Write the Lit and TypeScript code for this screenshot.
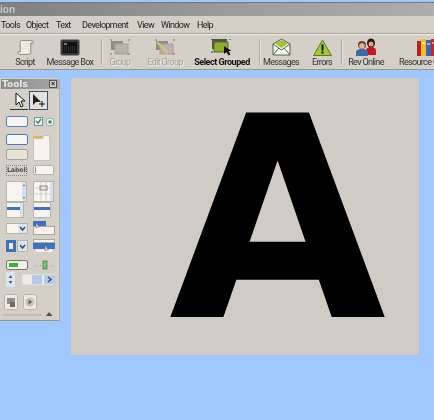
import { LitElement, html, css, svg } from "lit";
import { customElement } from "lit/decorators.js";

const menus = [["Tools",25],["Object",30],["Text",26],["Development",55],["View",24],["Window",36],["Help",20]] as const;

const ic = (w:number,h:number,body:any,vw=w,vh=h) => html`<svg width=${w} height=${h} viewBox="0 0 ${vw} ${vh}">${body}</svg>`;

const scriptIc = ic(17,17,svg`<path d="M5 1h13c1.500 0 2 1 2 2v1h-3v11c0 2-1 3-3 3H3c-1.500 0-2-1-2-2v-1h3V3c0-1 .5-2 1-2z" fill="#f2efe6" stroke="#77756c"/><path d="M7 5h8M7 8h8M7 11h8" stroke="#dcd9cf"/>`,21,19);
const msgIc = ic(20,17,svg`<rect x=".5" y=".5" width="19" height="16" rx="2" fill="#3a3a3a" stroke="#8b8b8b"/><rect x="3" y="3" width="14" height="11" fill="#111"/><path d="M4 5h3" stroke="#ddd"/><path d="M4 8h11M4 10h11M4 12h11" stroke="#444" stroke-dasharray="1 1"/>`);
const groupIc = ic(20,17,svg`<rect x="1" y="2" width="12" height="9" fill="#8f8d86"/><rect x="5" y="5" width="13" height="10" fill="#b5b3ab" stroke="#a3a19a"/><path d="M0 1h2M18 1h2M18 15h2M0 15h2" stroke="#777"/>`);
const editIc = ic(20,17,svg`<rect x="1" y="2" width="12" height="9" fill="#8f8d86"/><rect x="5" y="5" width="13" height="10" fill="#b5b3ab" stroke="#a3a19a"/><path d="M2 3l11 11" stroke="#d8c27a" stroke-width="2"/><path d="M0 1h2M18 1h2M18 15h2" stroke="#777"/>`);
const selIc = ic(22,17,svg`<rect x="1" y="0" width="15" height="10" fill="#55534d"/><rect x="3" y="3" width="14" height="10" fill="#8fae2a" stroke="#55652a"/><path d="M13 7l0 8 2.500-2 2 3.500 2-1-2-3.500 3 0z" fill="#111"/><path d="M0 0h2M18 0h2M0 13h2" stroke="#333"/>`);
const mailIc = ic(19,18,svg`<path d="M1 6L9.500 1 18 6v11H1z" fill="#f4f6ee" stroke="#55604a"/><path d="M3 5.500L9.500 2 16 5.500 9.500 10z" fill="#9cc23a"/><path d="M1 6l8.500 6L18 6M1 17l6-7M18 17l-6-7" fill="none" stroke="#55604a"/>`);
const warnIc = ic(19,17,svg`<path d="M9.500 1L18.500 16.500H.5z" fill="#a2c83a" stroke="#5f7a24"/><path d="M9.500 5.500v6" stroke="#111" stroke-width="2"/><path d="M9.500 12.500v2" stroke="#111" stroke-width="2"/>`);
const revIc = ic(21,18,svg`<ellipse cx="15" cy="5" rx="4" ry="4.500" fill="#251a18"/><circle cx="15" cy="6" r="2.500" fill="#d9a586"/><path d="M10 17v-4c0-3 2-4 5-4s5 1 5 4v4z" fill="#c8161d"/><circle cx="6" cy="7" r="4" fill="#6b4432"/><circle cx="6" cy="8" r="2.800" fill="#e2b394"/><path d="M0 18v-3c0-3 2-4 6-4s6 1 6 4v3z" fill="#3e68ad"/>`);
const booksIc = ic(22,19,svg`<rect x="0" y="3" width="4" height="15" fill="#b8232a"/><rect x="4" y="1" width="5" height="17" fill="#eec21f"/><rect x="9" y="2" width="5" height="16" fill="#3467b7"/><rect x="14" y="1" width="5" height="17" fill="#c9242b"/><path d="M5 5h3M10 6h3M15 5h3" stroke="#fff"/>`);

const cell = (w:number,h:number,b:any) => ic(w,h,b);
const blue = "#5b80b8";

@customElement("app-root")
class AppRoot extends LitElement {
  static styles = css`
    :host { display:block; width:434px; height:420px; position:relative; overflow:hidden; background:#a0c8ff; font-family:"Liberation Sans",Arial,sans-serif; }
    .top { height:2px; }
    .window { background:#d4d0c8; border-bottom:1px solid #9a978f; filter:blur(.3px); }
    .title { height:13px; background:linear-gradient(90deg,#7f7f7f,#9a9a9a 50%,#adadad 100%); border-top:1px solid #777; font:bold 10px/13px "Liberation Sans",sans-serif; color:#c9c9c9; overflow:hidden; }
    .menu { display:flex; height:17px; align-items:center; padding-left:1px; font:9px Roboto,sans-serif; letter-spacing:-.6px; color:#222; border-bottom:1px solid #a8a59d; }
    .menu span { flex:none; white-space:nowrap; }
    .toolbar { display:flex; height:34px; border-top:1px solid #f0eee8; overflow:hidden; white-space:nowrap; }
    .tool { flex:none; display:flex; flex-direction:column; align-items:center; justify-content:flex-end; height:33px; font:9px Roboto,sans-serif; letter-spacing:-.65px; color:#333; line-height:11px; }
    .tool svg { display:block; margin-bottom:1px; }
    .tool.off { color:#a3a098; text-shadow:1px 1px 0 #eee; }
    .tool.bold { font-weight:bold; color:#111; letter-spacing:-.45px; }
    .tool.over { align-items:flex-start; width:60px; }
    .books { display:block; margin-left:18px; height:19px; }
    .sep { flex:none; width:1px; height:26px; margin:4px 0 0; background:#aeaba3; box-shadow:1px 0 0 #e6e4de; }
    .work { padding:8px 15px 0 71px; }
    .canvas { width:348px; height:277px; background:#d0ccc5; position:relative; overflow:hidden; }
    .big { display:block; font:bold 280.500px/277px "DejaVu Sans",sans-serif; color:#000; text-align:center; position:absolute; left:98px; top:4px; width:214px; }

    .palette { position:absolute; left:0; top:78px; width:60px; height:243px; background:#d4d0c8; border-right:1px solid #b4b1a9; border-bottom:1px solid #9a978f; box-sizing:border-box; filter:blur(.4px); }
    .ptitle { margin:1px 0 0 1px; height:10px; background:linear-gradient(90deg,#8a8a8a,#a9a9a9); display:flex; align-items:center; justify-content:space-between; font:bold 9px/10px "DejaVu Sans",sans-serif; color:#e8e8e8; padding:0 2px 0 1px; }
    .close { width:8px; height:8px; background:#d4d0c8; border:1px solid #555; box-sizing:border-box; font:bold 7px/6px "Liberation Sans",sans-serif; color:#111; text-align:center; }
    .rows { display:flex; flex-direction:column; padding-left:6px; }
    .row { display:flex; align-items:flex-start; }
    .row svg { display:block; flex:none; }
    .stack { display:flex; flex-direction:column; gap:4px; width:22px; flex:none; }
    .label { width:21px; height:11px; box-sizing:border-box; border:1px dotted #888; font:bold 6.500px/9px "DejaVu Sans",sans-serif; color:#555; text-align:center; margin-right:6px; letter-spacing:-.3px; }
    .foot { display:flex; justify-content:flex-end; padding-right:5px; margin-top:1px; }
    .arrow { display:flex; margin:2px 0 0 10px; }
  `;

  render() {
    return html`
      <div class="top"></div>
      <div class="window">
        <div class="title">ion</div>
        <div class="menu">${menus.map(([m,w]) => html`<span style="width:${w}px">${m}</span>`)}</div>
        <div class="toolbar">
          <div class="tool" style="width:8px"></div>
          <div class="tool" style="width:34px">${scriptIc}<span>Script</span></div>
          <div class="tool" style="width:56px">${msgIc}<span>Message Box</span></div>
          <div class="tool" style="width:3px"></div><div class="sep"></div><div class="tool" style="width:2px"></div>
          <div class="tool off" style="width:32px">${groupIc}<span>Group</span></div>
          <div class="tool off" style="width:58px">${editIc}<span>Edit Group</span></div>
          <div class="tool bold" style="width:56px">${selIc}<span>Select Grouped</span></div>
          <div class="tool" style="width:9px"></div><div class="sep"></div><div class="tool" style="width:2px"></div>
          <div class="tool" style="width:38px">${mailIc}<span>Messages</span></div>
          <div class="tool" style="width:5px"></div>
          <div class="tool" style="width:34px">${warnIc}<span>Errors</span></div>
          <div class="tool" style="width:2px"></div><div class="sep"></div><div class="tool" style="width:3px"></div>
          <div class="tool" style="width:42px">${revIc}<span>Rev Online</span></div>
          <div class="tool" style="width:12px"></div>
          <div class="tool over"><span class="books">${booksIc}</span><span>Resource Center</span></div>
        </div>
      </div>
      <div class="work"><div class="canvas"><span class="big">A</span></div></div>
      ${this.palette()}
    `;
  }

  palette() {
    const b = (y:number, x:number, w:number, h:number, extra = "#f6f5f0", st = blue) => svg`<rect x=${x+.5} y=${y+.5} width=${w-1} height=${h-1} rx="1.500" fill=${extra} stroke=${st}/>`;
    return html`<div class="palette">
      <div class="ptitle"><span>Tools</span><span class="close">×</span></div>
      <div class="arrow">
        ${cell(19,19,svg`<path d="M0 18.500h18" stroke="#333"/><path d="M6 2v12l3-3 2 5 2-1-2-5h4z" fill="#fff" stroke="#111"/>`)}
        ${cell(19,19,svg`<rect x=".5" y=".5" width="18" height="18" fill="#e4e2da" stroke="#3a5378"/><path d="M4 3v11l3-3h5z" fill="#222"/><path d="M13 10v6M10 13h6" stroke="#111"/>`)}
      </div>
      <div class="rows" style="margin-top:6px">
        <div class="row">${cell(22,11,b(0,0,22,11))}${cell(27,11,svg`<rect x="6.500" y="1.500" width="8" height="8" fill="#f4f4ee" stroke="#6d8db5"/><path d="M8 5l2 2 3-4" stroke="#2e9a34" stroke-width="1.500" fill="none"/><circle cx="22" cy="6" r="4" fill="#f4f4ee" stroke="#8ea7c5"/><circle cx="22" cy="6" r="1.800" fill="#3a9a3c"/>`)}</div>
        <div class="row" style="margin-top:7px;height:33px">
          <div class="stack">
            ${cell(22,11,b(0,0,22,11,"#f6f5f0","#4f7ac0"))}
            ${cell(22,11,b(0,0,22,11,"#e6e3d8","#a9a69c"))}
          </div>
          ${cell(27,27,svg`<path d="M5.500 4.500h9l1-3h6v6h0.500v19h-16.500z" fill="#f5f4ee" stroke="#c4c1b8"/><path d="M5 3h9" stroke="#e8b63c" stroke-width="2"/>`)}
        </div>
        <div class="row" style="margin-top:-2px">
          <span class="label">Label:</span>
          ${cell(22,11,svg`${b(0,0,21,10,"#f6f5f0","#b7b4aa")}<path d="M2.500 2v6" stroke="#888"/>`)}
        </div>
        <div class="row" style="margin-top:5px">
          ${cell(27,21,svg`<rect x=".5" y=".5" width="20" height="20" fill="#f6f5f0" stroke="#b7b4aa"/><rect x="16" y="1" width="4" height="19" fill="#d7e0ee"/><path d="M18 3l-1 2h2zM18 18l-1-2h2z" fill="#476fa8"/>`)}
          ${cell(22,21,svg`<rect x=".5" y=".5" width="20" height="20" fill="#f6f5f0" stroke="#b7b4aa"/><path d="M1 7h16M1 13h16M8 1v19M13 1v19" stroke="#d5d2c8"/><rect x="7" y="5" width="7" height="4" fill="none" stroke="#888"/><rect x="17" y="1" width="3" height="19" fill="#d7e0ee"/>`)}
        </div>
        <div class="row" style="margin-top:0">
          ${cell(27,16,svg`<rect x=".5" y=".5" width="17" height="15" fill="#f6f5f0" stroke="#b7b4aa"/><rect x="1" y="5" width="13" height="3" fill="#3c72c4"/><rect x="14" y="1" width="3" height="14" fill="#d7e0ee"/>`)}
          ${cell(22,16,svg`<rect x=".5" y=".5" width="17" height="15" fill="#f6f5f0" stroke="#b7b4aa"/><rect x="1" y="5" width="16" height="3" fill="#3c72c4"/>`)}
        </div>
        <div class="row" style="margin-top:3px">
          ${cell(27,15,svg`<rect x=".5" y="2.500" width="21" height="10" fill="#f6f5f0" stroke="#b7b4aa"/><rect x="12" y="3" width="9" height="9" fill="#dbe3ee"/><path d="M14 6l2.500 3L19 6" fill="none" stroke="#2d4f86" stroke-width="1.500"/>`)}
          ${cell(23,15,svg`<rect x="0" y="0" width="13" height="6" fill="#3c72c4"/><rect x=".5" y="5.500" width="21" height="8" fill="#f4f2ea" stroke="#aaa79e"/><path d="M3 2v5l1.500-1h2z" fill="#ddd" stroke="#555" stroke-width=".5"/>`)}
        </div>
        <div class="row" style="margin-top:3px">
          ${cell(27,14,svg`<rect x="0" y="1" width="10" height="12" fill="#3c72c4"/><rect x="3" y="4" width="4" height="6" fill="#f4f2ea"/><rect x="11.500" y="1.500" width="10" height="11" fill="#dbe3ee" stroke="#b7b4aa"/><path d="M14 6l2.500 3L19 6" fill="none" stroke="#2d4f86" stroke-width="1.500"/>`)}
          ${cell(23,14,svg`<rect x=".5" y=".5" width="21" height="3" fill="#f4f2ea" stroke="#aaa79e"/><rect x="0" y="4" width="22" height="6" fill="#3c72c4"/><rect x="3" y="10" width="16" height="3" fill="#f4f2ea"/><path d="M12 6v6l1.500-1h2z" fill="#ddd" stroke="#555" stroke-width=".5"/>`)}
        </div>
        <div class="row" style="margin-top:7px">
          ${cell(28,11,svg`<rect x=".5" y=".5" width="21" height="9" rx="1.500" fill="#f1f0e8" stroke="#77756c"/><rect x="3" y="3" width="9" height="4" fill="#35b13c"/>`)}
          ${cell(22,11,svg`<path d="M0 6h21" stroke="#b6b3a9" stroke-dasharray="2 1"/><rect x="9" y="1" width="4" height="8" fill="#7cc27c" stroke="#2f7f3f" stroke-width=".7"/>`)}
        </div>
        <div class="row" style="margin-top:1px">
          ${cell(16,15,svg`<rect x="0" y="0" width="9" height="15" fill="#dfe6f2"/><path d="M4.500 3L2.500 6h4zM4.500 12L2.500 9h4z" fill="#4c648c"/>`)}
          ${cell(33,15,svg`<rect x=".5" y="2.500" width="32" height="10" fill="#ecebe4"/><rect x="10" y="3" width="10" height="9" fill="#b6cbea"/><rect x="22" y="3" width="11" height="9" fill="#b6cbea"/><path d="M26 5l3 2.500-3 2.500" fill="none" stroke="#2d4f86" stroke-width="1.500"/>`)}
        </div>
      </div>
      <div class="rows" style="padding-left:4px;margin-top:7px">
        <div class="row" style="gap:5px">
          ${cell(14,16,svg`<rect x=".5" y=".5" width="13" height="15" rx="1" fill="#eceae3" stroke="#b7b4aa"/><rect x="3" y="4" width="8" height="6" fill="#8f8d86"/><rect x="6" y="8" width="5" height="5" fill="#6e6c66"/>`)}
          ${cell(14,16,svg`<rect x=".5" y=".5" width="13" height="15" rx="2" fill="#eceae3" stroke="#b7b4aa"/><circle cx="7" cy="8" r="4.500" fill="#c5c3bb"/><path d="M5.500 5.500v5l4-2.500z" fill="#6a6860"/>`)}
        </div>
      </div>
      <div class="foot">
        ${cell(56,6,svg`<path d="M3 4h40" stroke="#a9a69e"/><path d="M51 1l3.500 4h-7z" fill="#55534e"/>`)}
      </div>
    </div>`;
  }
}
